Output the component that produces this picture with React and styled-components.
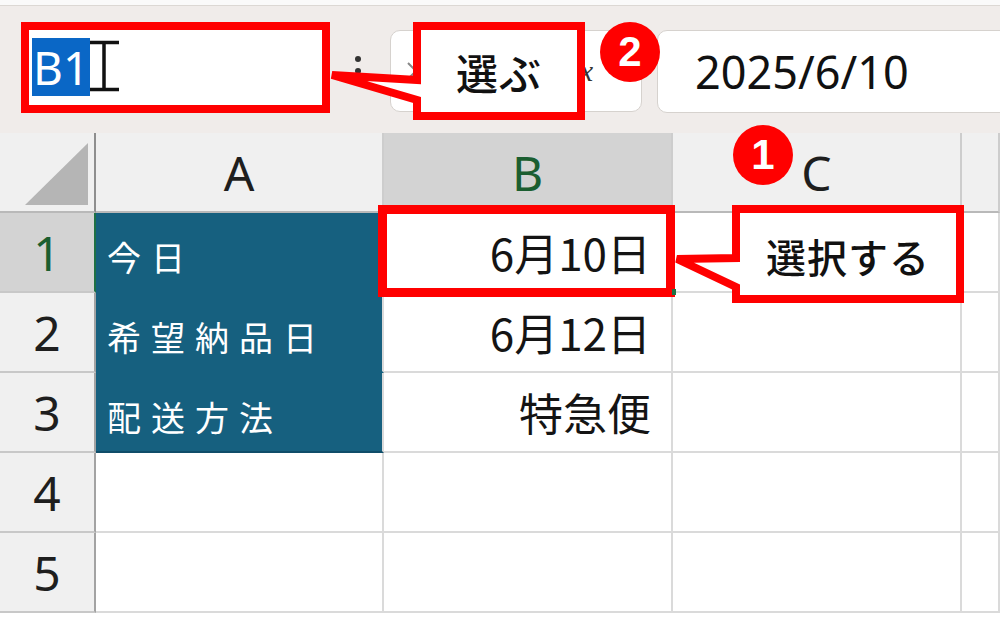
import React from "react";
import styled, { createGlobalStyle } from "styled-components";

const GlobalStyle = createGlobalStyle`
  html, body { margin: 0; padding: 0; background: #ffffff; overflow: hidden; }
  body { font-family: "Noto Sans", "Noto Sans CJK JP", sans-serif; }
`;

const Page = styled.div`
  position: relative;
  width: 1000px;
  height: 622px;
  overflow: hidden;
  background: #ffffff;
`;

const TopStrip = styled.div`
  height: 5px;
  background: #fafafa;
  border-bottom: 1px solid #dcd8d4;
`;

const FormulaBar = styled.div`
  height: 127px;
  box-sizing: border-box;
  padding: 24px 0 0 28px;
  display: flex;
  align-items: flex-start;
  background: #f0ecea;
`;

const NameBox = styled.div`
  width: 297px;
  height: 78px;
  box-sizing: border-box;
  padding: 8px 0 0 4px;
  background: #ffffff;
  display: flex;
  align-items: flex-start;
`;

const SelectedText = styled.span`
  display: inline-flex;
  align-items: center;
  height: 58px;
  padding: 0 1px;
  background: #0a67c6;
  color: #ffffff;
  font-family: "Noto Sans", sans-serif;
  font-size: 46px;
  line-height: 1;
`;

const Cursor = styled.svg`
  display: block;
  margin-top: 2px;
`;

const MoreDots = styled.div`
  width: 65px;
  height: 82px;
  display: flex;
  align-items: center;
  justify-content: center;
`;

const FxBox = styled.div`
  width: 252px;
  height: 82px;
  box-sizing: border-box;
  background: #ffffff;
  border: 1.5px solid #d6d2ce;
  border-radius: 10px;
  display: flex;
  align-items: center;
  justify-content: space-between;
  padding: 0 48px 0 14px;
`;

const FxText = styled.span`
  font-family: "Liberation Serif", serif;
  font-style: italic;
  font-size: 30px;
  color: #333;
`;

const FormulaInput = styled.div`
  flex: 1;
  height: 83px;
  margin: 0 -20px 0 15px;
  box-sizing: border-box;
  background: #ffffff;
  border: 1.5px solid #d6d2ce;
  border-radius: 10px;
  display: flex;
  align-items: center;
  padding-left: 37px;
  font-family: "Noto Sans", sans-serif;
  font-size: 45px;
  color: #111;
`;

const Sheet = styled.div`
  display: grid;
  grid-template-columns: 96px 288px 289px 289px 1fr;
  grid-auto-rows: 80px;
`;

const Corner = styled.div`
  position: relative;
  background: #f0f0f0;
  border-right: 2px solid #8e8e8e;
  border-bottom: 2px solid #b9b9b9;
  box-sizing: border-box;
`;

const ColHeader = styled.div`
  box-sizing: border-box;
  background: ${(p) => (p.$selected ? "#d3d3d3" : "#f0f0f0")};
  border-right: 2px solid #cdcdcd;
  border-bottom: 2px solid #b9b9b9;
  display: flex;
  align-items: center;
  justify-content: center;
  font-family: "Noto Sans", sans-serif;
  font-size: 48px;
  color: ${(p) => (p.$selected ? "#1b5e30" : "#1e1e1e")};
`;

const RowHeader = styled.div`
  box-sizing: border-box;
  background: ${(p) => (p.$selected ? "#d3d3d3" : "#f0f0f0")};
  border-right: 2px solid ${(p) => (p.$selected ? "#1e7145" : "#a3a3a3")};
  border-bottom: 2px solid #c8c8c8;
  display: flex;
  align-items: center;
  justify-content: center;
  font-family: "Noto Sans", sans-serif;
  font-size: 48px;
  color: ${(p) => (p.$selected ? "#1b5e30" : "#1e1e1e")};
`;

const Cell = styled.div`
  box-sizing: border-box;
  background: ${(p) => (p.$fill ? "#16607f" : "#ffffff")};
  border-right: 2px solid #dadada;
  border-bottom: 2px solid ${(p) => (p.$fill ? (p.$edge ? "#0f4d69" : "#16607f") : "#dadada")};
  display: flex;
  align-items: center;
  justify-content: ${(p) => (p.$right ? "flex-end" : "flex-start")};
  padding: ${(p) => (p.$right ? "0 20px 0 0" : "8px 0 0 11px")};
  font-family: "Noto Sans CJK JP", sans-serif;
  font-size: ${(p) => (p.$fill ? "34px" : "44px")};
  letter-spacing: ${(p) => (p.$fill ? "10px" : "0px")};
  color: ${(p) => (p.$fill ? "#ffffff" : "#141414")};
  white-space: nowrap;
`;

const HighlightBox = styled.div`
  position: absolute;
  left: ${(p) => p.$x}px;
  top: ${(p) => p.$y}px;
  width: ${(p) => p.$w}px;
  height: ${(p) => p.$h}px;
  box-sizing: border-box;
  border: ${(p) => p.$t}px solid #ff0000;
`;

const FillHandle = styled.div`
  position: absolute;
  left: 672px;
  top: 289px;
  width: 4px;
  height: 6px;
  background: #1e7145;
`;

const CalloutWrap = styled.div`
  position: absolute;
  left: ${(p) => p.$x}px;
  top: ${(p) => p.$y}px;
  width: ${(p) => p.$w}px;
  height: ${(p) => p.$h}px;
  box-sizing: border-box;
  padding-top: ${(p) => p.$pt}px;
  display: flex;
  align-items: center;
  justify-content: center;
`;

const CalloutShape = styled.svg`
  position: absolute;
  left: 0;
  top: 0;
  overflow: visible;
`;

const CalloutLabel = styled.span`
  position: relative;
  font-family: "Noto Sans CJK JP", sans-serif;
  font-size: ${(p) => p.$size}px;
  font-weight: 500;
  color: #111111;
  letter-spacing: 1px;
`;

const Badge = styled.div`
  position: absolute;
  left: ${(p) => p.$x}px;
  top: ${(p) => p.$y}px;
  width: 60px;
  height: 60px;
  border-radius: 50%;
  background: #ff0000;
  color: #ffffff;
  display: flex;
  align-items: center;
  justify-content: center;
  font-family: "Liberation Sans", "Noto Sans", sans-serif;
  font-weight: 700;
  font-size: 42px;
  line-height: 1;
`;

function Callout({ x, y, w, h, tip, j1, j2, label, size, pt = 0 }) {
  const d = `M4,4 H${w - 4} V${h - 4} H4 V${j2} L${tip[0]},${tip[1]} L4,${j1} Z`;
  return (
    <CalloutWrap $x={x} $y={y} $w={w} $h={h} $pt={pt}>
      <CalloutShape width={w} height={h}>
        <path d={d} fill="#ffffff" stroke="#ff0000" strokeWidth="8" strokeLinejoin="miter" />
      </CalloutShape>
      <CalloutLabel $size={size}>{label}</CalloutLabel>
    </CalloutWrap>
  );
}

const rows = [
  { n: 1, a: "今日", b: "6月10日", sel: true },
  { n: 2, a: "希望納品日", b: "6月12日" },
  { n: 3, a: "配送方法", b: "特急便" },
  { n: 4 },
  { n: 5 },
];

export default function App() {
  return (
    <Page>
      <GlobalStyle />
      <TopStrip />
      <FormulaBar>
        <NameBox>
          <SelectedText>B1</SelectedText>
          <Cursor width="30" height="52" viewBox="0 0 30 52">
            <path d="M0 2.5 H29 M14 2.5 V49.5 M0 49.5 H29" stroke="#111" strokeWidth="3.5" fill="none" />
          </Cursor>
        </NameBox>
        <MoreDots>
          <svg width="8" height="32" viewBox="0 0 8 32">
            <circle cx="4" cy="4" r="3" fill="#333" />
            <circle cx="4" cy="16" r="3" fill="#333" />
            <circle cx="4" cy="28" r="3" fill="#333" />
          </svg>
        </MoreDots>
        <FxBox>
          <svg width="22" height="22" viewBox="0 0 22 22">
            <path d="M3 3 L19 19 M19 3 L3 19" stroke="#888" strokeWidth="2" />
          </svg>
          <svg width="24" height="22" viewBox="0 0 24 22">
            <path d="M2 12 L9 19 L22 3" stroke="#888" strokeWidth="2" fill="none" />
          </svg>
          <FxText>fx</FxText>
        </FxBox>
        <FormulaInput>2025/6/10</FormulaInput>
      </FormulaBar>
      <Sheet>
        <Corner>
          <svg width="94" height="78" viewBox="0 0 94 78">
            <polygon points="25,72 88,10 88,72" fill="#b5b5b5" />
          </svg>
        </Corner>
        <ColHeader>A</ColHeader>
        <ColHeader $selected>B</ColHeader>
        <ColHeader>C</ColHeader>
        <ColHeader />
        {rows.map((r) => (
          <React.Fragment key={r.n}>
            <RowHeader $selected={r.sel}>{r.n}</RowHeader>
            <Cell $fill={!!r.a} $edge={r.n === 3}>{r.a}</Cell>
            <Cell $right>{r.b}</Cell>
            <Cell />
            <Cell />
          </React.Fragment>
        ))}
      </Sheet>

      <HighlightBox $x={21} $y={22} $w={309} $h={91} $t={8} />
      <HighlightBox $x={378} $y={205} $w={297} $h={92} $t={9} />
      <FillHandle />

      <Callout x={413} y={22} w={172} h={98} tip={[-81, 53]} j1={58} j2={78} label="選ぶ" size={42} />
      <Callout x={732} y={205} w={232} h={98} tip={[-55, 54]} j1={53} j2={82} label="選択する" size={40} pt={4} />

      <Badge $x={600} $y={22}>2</Badge>
      <Badge $x={733} $y={125}>1</Badge>
    </Page>
  );
}
